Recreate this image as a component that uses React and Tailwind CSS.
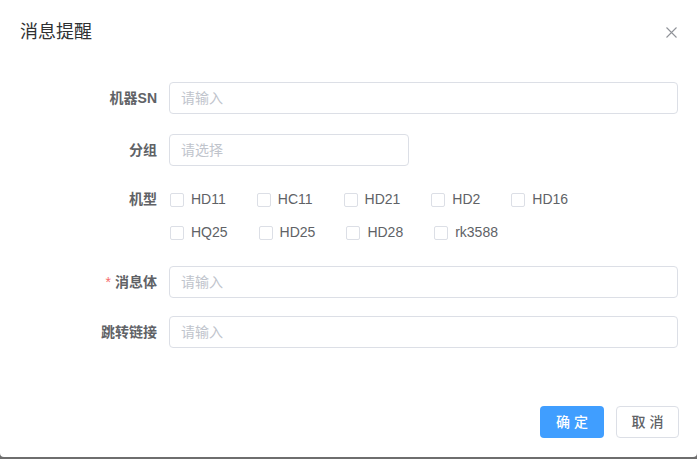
import { useState } from 'react';

const font = { fontFamily: '"Liberation Sans", "Noto Sans CJK SC", sans-serif' };

const models = [
  ['HD11', 'HC11', 'HD21', 'HD2', 'HD16'],
  ['HQ25', 'HD25', 'HD28', 'rk3588'],
];

const Label = ({ children, required }) => (
  <div className="w-[150px] shrink-0 pr-3 flex items-center justify-end text-[14px] font-bold text-[#606266]">
    {required && <span className="text-[#f56c6c] mr-1 font-normal">*</span>}
    {children}
  </div>
);

const TextInput = ({ placeholder, className = '' }) => (
  <input
    placeholder={placeholder}
    className={`h-8 rounded border border-[#dcdfe6] bg-white px-[11px] text-[14px] text-[#606266] placeholder:text-[#c0c4cc] outline-none ${className}`}
  />
);

const Checkbox = ({ label, checked, onToggle }) => (
  <label className="flex items-center mr-[31px] cursor-pointer select-none" onClick={onToggle}>
    <span
      className={`w-[14px] h-[14px] rounded-[2px] border ${checked ? 'border-[#409eff] bg-[#409eff]' : 'border-[#dcdfe6] bg-white'}`}
    />
    <span className="ml-[7px] text-[14px] text-[#606266]">{label}</span>
  </label>
);

export default function App() {
  const [picked, setPicked] = useState([]);

  const toggle = (m) =>
    setPicked((p) => (p.includes(m) ? p.filter((x) => x !== m) : [...p, m]));

  return (
    <div className="w-[697px] h-[459px] bg-[#6e6e6e]" style={font}>
      <div className="h-[457px] bg-white rounded-b-[4px] flex flex-col">
        {/* Header */}
        <div className="flex items-center justify-between px-5 pt-5 pb-[10px]">
          <h2 className="text-[18px] leading-6 text-[#303133]">消息提醒</h2>
          <button className="w-4 h-4 flex items-center justify-center mr-[-2px]">
            <svg width="11" height="11" viewBox="0 0 11 11">
              <path d="M0.5 0.5 L10.5 10.5 M10.5 0.5 L0.5 10.5" stroke="#909399" strokeWidth="1.1" />
            </svg>
          </button>
        </div>

        {/* Form */}
        <div className="pl-[19px] pr-[19px] pt-[28px] flex flex-col">
          <div className="flex h-8 mb-5">
            <Label>机器SN</Label>
            <TextInput placeholder="请输入" className="flex-1" />
          </div>

          <div className="flex h-8 mb-[17px]">
            <Label>分组</Label>
            <TextInput placeholder="请选择" className="w-[240px] border-[#c0c4cc]" />
          </div>

          <div className="flex mb-[17px]">
            <div className="h-[33px] flex">
              <Label>机型</Label>
            </div>
            <div className="flex flex-col">
              {models.map((row, i) => (
                <div key={i} className="h-[33px] flex items-center pl-px">
                  {row.map((m) => (
                    <Checkbox key={m} label={m} checked={picked.includes(m)} onToggle={() => toggle(m)} />
                  ))}
                </div>
              ))}
            </div>
          </div>

          <div className="flex h-8 mb-[18px]">
            <Label required>消息体</Label>
            <TextInput placeholder="请输入" className="flex-1" />
          </div>

          <div className="flex h-8">
            <Label>跳转链接</Label>
            <TextInput placeholder="请输入" className="flex-1" />
          </div>
        </div>

        {/* Footer */}
        <div className="mt-auto flex justify-end gap-3 pr-[18px] pb-[19px]">
          <button className="w-16 h-8 rounded bg-[#409eff] text-white text-[14px] font-medium">
            确 定
          </button>
          <button className="w-[63px] h-8 rounded border border-[#dcdfe6] bg-white text-[#606266] text-[14px] font-medium">
            取 消
          </button>
        </div>
      </div>
    </div>
  );
}
